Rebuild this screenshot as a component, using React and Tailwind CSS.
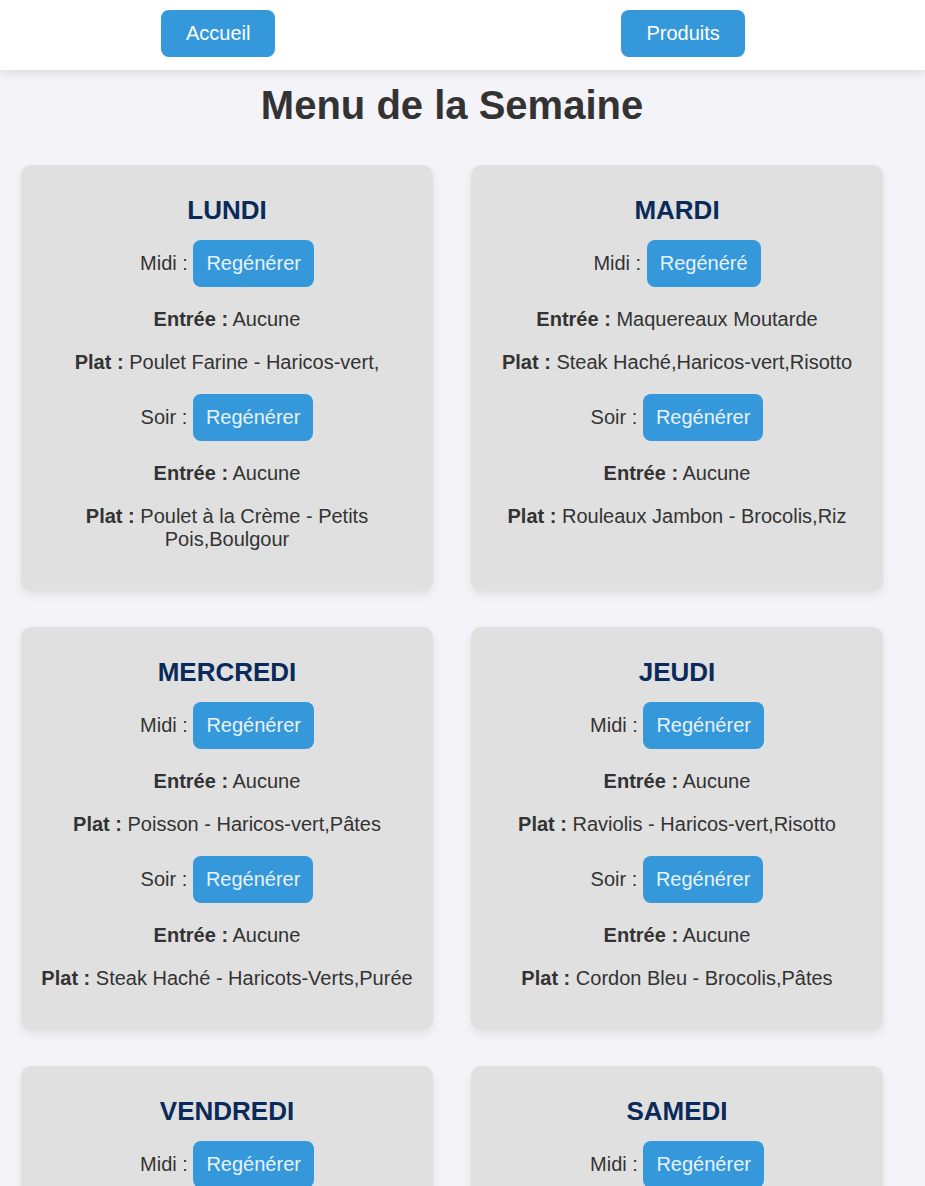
import React from "react";

const week = [
  {
    day: "LUNDI",
    midi: { label: "Regénérer", entree: "Aucune", plat: "Poulet Farine - Haricos-vert," },
    soir: { label: "Regénérer", entree: "Aucune", plat: "Poulet à la Crème - Petits Pois,Boulgour" },
  },
  {
    day: "MARDI",
    midi: { label: "Regénéré", entree: "Maquereaux Moutarde", plat: "Steak Haché,Haricos-vert,Risotto" },
    soir: { label: "Regénérer", entree: "Aucune", plat: "Rouleaux Jambon - Brocolis,Riz" },
  },
  {
    day: "MERCREDI",
    midi: { label: "Regénérer", entree: "Aucune", plat: "Poisson - Haricos-vert,Pâtes" },
    soir: { label: "Regénérer", entree: "Aucune", plat: "Steak Haché - Haricots-Verts,Purée" },
  },
  {
    day: "JEUDI",
    midi: { label: "Regénérer", entree: "Aucune", plat: "Raviolis - Haricos-vert,Risotto" },
    soir: { label: "Regénérer", entree: "Aucune", plat: "Cordon Bleu - Brocolis,Pâtes" },
  },
  {
    day: "VENDREDI",
    midi: { label: "Regénérer", entree: "Aucune", plat: "Poisson - Haricos-vert,Pâtes" },
    soir: { label: "Regénérer", entree: "Aucune", plat: "Steak Haché - Haricots-Verts,Purée" },
  },
  {
    day: "SAMEDI",
    midi: { label: "Regénérer", entree: "Aucune", plat: "Raviolis - Haricos-vert,Risotto" },
    soir: { label: "Regénérer", entree: "Aucune", plat: "Cordon Bleu - Brocolis,Pâtes" },
  },
];

const Repas = ({ titre, repas }) => (
  <>
    <div className="pb-px">
      {titre} :{" "}
      <button className="bg-[#3498db] text-[#e8f2fb] px-[13px] py-3 leading-[23px] rounded-lg">
        {repas.label}
      </button>
    </div>
    <p className="mt-5">
      <strong>Entrée :</strong> {repas.entree}
    </p>
    <p className="mt-5">
      <strong>Plat :</strong> {repas.plat}
    </p>
  </>
);

const DayCard = ({ jour }) => (
  <div className="bg-[#e0e0e0] rounded-[10px] shadow-[0_4px_10px_rgba(0,0,0,0.08)] px-5 pt-[30px] pb-5 text-center">
    <h2 className="text-[26px] leading-[30px] font-bold text-[#0a2b5a] mb-[15px]">
      {jour.day}
    </h2>
    <Repas titre="Midi" repas={jour.midi} />
    <div className="mt-5">
      <Repas titre="Soir" repas={jour.soir} />
    </div>
    <div className="h-5" />
  </div>
);

export default function App() {
  return (
    <div className="min-h-screen bg-[#f4f4f8] text-[#333] text-[20px] leading-[23px] font-['Liberation_Sans',Arial,sans-serif]">
      <nav className="h-[70px] bg-white shadow-[0_2px_10px_rgba(0,0,0,0.12)] flex items-start pt-[10px] pl-[161px] gap-[346px] relative">
        <button className="bg-[#3498db] text-white px-[25px] py-3 rounded-lg">Accueil</button>
        <button className="bg-[#3498db] text-white px-[25px] py-3 rounded-lg">Produits</button>
      </nav>
      <main className="w-[904px] px-[21px]">
        <h1 className="text-[40px] leading-[46px] font-bold text-center mt-3 mb-[37px]">
          Menu de la Semaine
        </h1>
        <div className="grid grid-cols-[412px_412px] gap-x-[38px] gap-y-9 pb-10">
          {week.map((jour) => (
            <DayCard key={jour.day} jour={jour} />
          ))}
        </div>
      </main>
    </div>
  );
}
